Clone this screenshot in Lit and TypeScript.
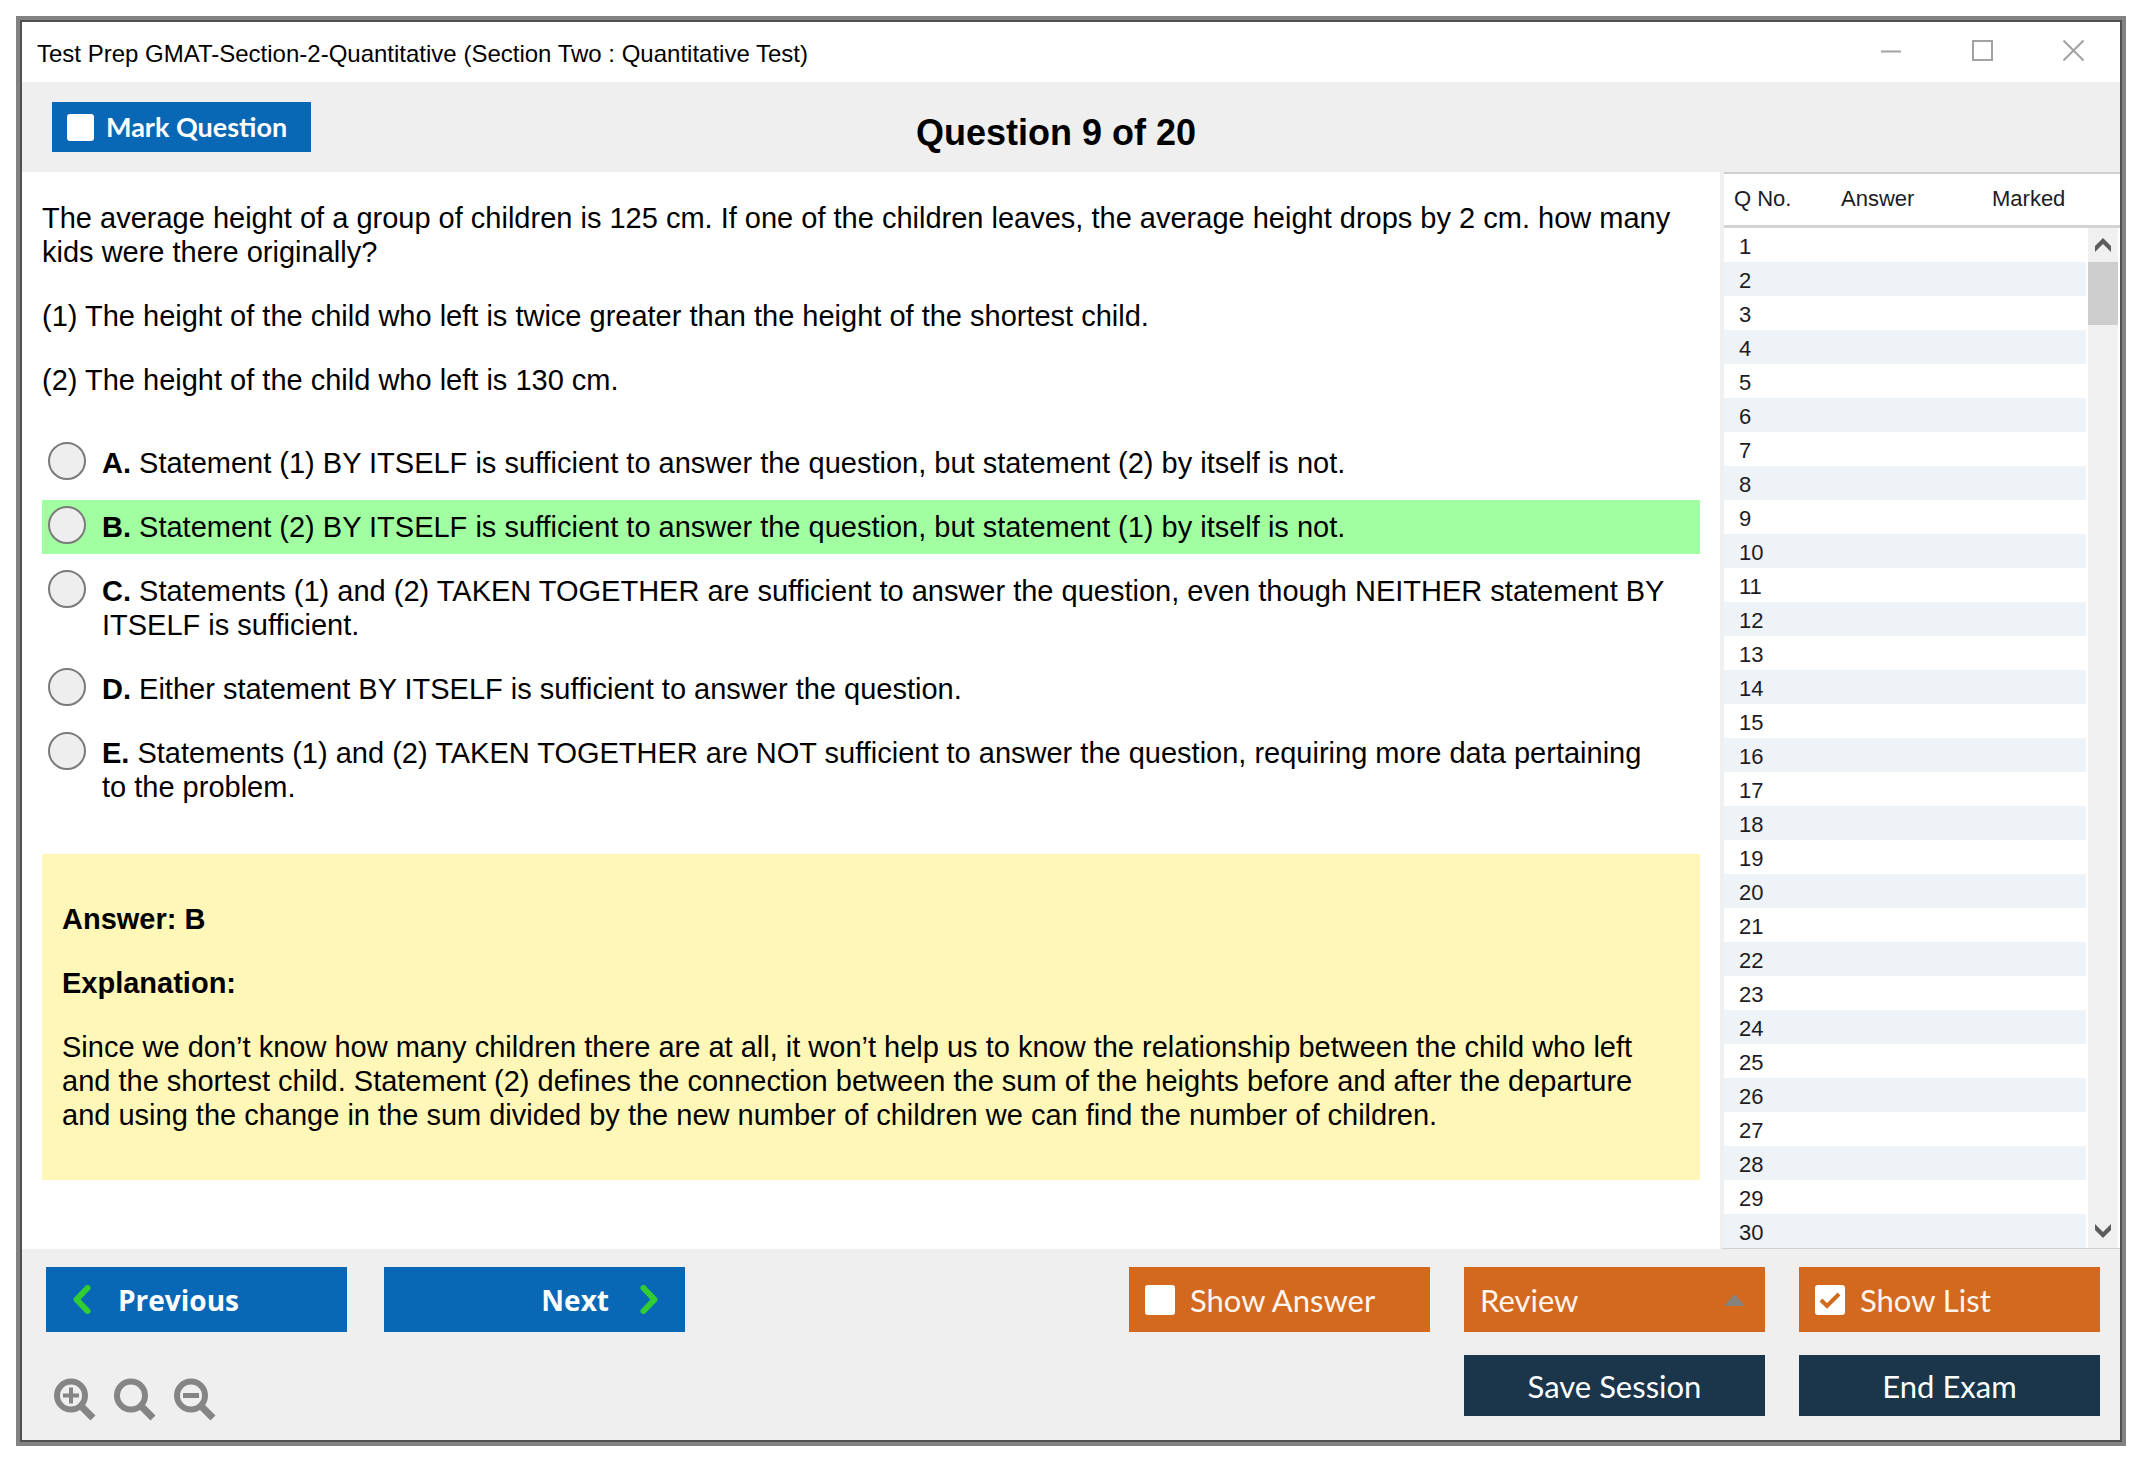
import { LitElement, html, css, svg } from "lit";
import { customElement, state } from "lit/decorators.js";
import { classMap } from "lit/directives/class-map.js";

interface Choice {
  key: string;
  text: string;
}

const CHOICES: Choice[] = [
  { key: "A", text: "Statement (1) BY ITSELF is sufficient to answer the question, but statement (2) by itself is not." },
  { key: "B", text: "Statement (2) BY ITSELF is sufficient to answer the question, but statement (1) by itself is not." },
  { key: "C", text: "Statements (1) and (2) TAKEN TOGETHER are sufficient to answer the question, even though NEITHER statement BY ITSELF is sufficient." },
  { key: "D", text: "Either statement BY ITSELF is sufficient to answer the question." },
  { key: "E", text: "Statements (1) and (2) TAKEN TOGETHER are NOT sufficient to answer the question, requiring more data pertaining to the problem." },
];

const CORRECT = "B";
const ROWS = Array.from({ length: 30 }, (_, i) => i + 1);

@customElement("question-list")
export class QuestionList extends LitElement {
  static styles = css`
    :host {
      display: flex;
      border-left: 4px solid #f0f0f0;
      background: #fff;
      color: #1c1c24;
      font: 22px/30px "Liberation Sans", Arial, sans-serif;
    }
    .table {
      flex: 1;
      border-collapse: separate;
      border-spacing: 0;
      table-layout: fixed;
    }
    .head {
      box-sizing: border-box;
      height: 56px;
      padding: 0 0 2px;
      border-top: 2px solid #cfcfcf;
      border-bottom: 3px solid #d3d3d3;
      font-weight: 400;
      text-align: left;
    }
    .number {
      width: 107px;
      padding-left: 10px;
    }
    .answer {
      width: 150px;
      padding-left: 10px;
    }
    .marked {
      padding-left: 11px;
    }
    .cell {
      box-sizing: border-box;
      height: 34px;
      padding: 4px 0 0 15px;
    }
    .row:nth-child(even) .cell {
      background: #eef3f8;
    }
    .side {
      display: flex;
      flex-direction: column;
      width: 34px;
    }
    .corner {
      box-sizing: border-box;
      height: 56px;
      border-top: 2px solid #cfcfcf;
      border-bottom: 3px solid #d3d3d3;
    }
    .track {
      flex: 1;
      display: flex;
      flex-direction: column;
      margin: 0 2px;
      background: #f0f0f0;
    }
    .arrow {
      display: flex;
      align-items: center;
      justify-content: center;
      height: 34px;
      padding: 0;
      border: 0;
      background: none;
    }
    .thumb {
      height: 63px;
      margin-bottom: auto;
      background: #cdcdcd;
    }
  `;

  render() {
    return html`
      <table class="table">
        <thead>
          <tr>
            <th class="head number" scope="col">Q No.</th>
            <th class="head answer" scope="col">Answer</th>
            <th class="head marked" scope="col">Marked</th>
          </tr>
        </thead>
        <tbody>
          ${ROWS.map((n) => html`<tr class="row"><td class="cell">${n}</td><td class="cell"></td><td class="cell"></td></tr>`)}
        </tbody>
      </table>
      <div class="side">
        <div class="corner"></div>
        <div class="track">
          <button class="arrow" aria-label="Scroll up">
            <svg width="16" height="14" viewBox="0 0 16 14"><path d="M8 0 16 8V14L8 6 0 14V8Z" fill="#5c5c5c" /></svg>
          </button>
          <div class="thumb"></div>
          <button class="arrow" aria-label="Scroll down">
            <svg width="16" height="14" viewBox="0 0 16 14"><path d="M8 14 16 6V0L8 8 0 0V6Z" fill="#5c5c5c" /></svg>
          </button>
        </div>
      </div>
    `;
  }
}

@customElement("app-root")
export class AppRoot extends LitElement {
  @state() private marked = false;
  @state() private showAnswer = false;
  @state() private showList = true;
  @state() private picked = "";

  static styles = css`
    :host {
      display: flex;
      box-sizing: border-box;
      min-height: 100vh;
      padding: 16px 24px 24px 16px;
      background: #fff;
      color: #000;
      font: 29px/34px "Liberation Sans", Arial, sans-serif;
    }
    .window {
      flex: 1;
      display: flex;
      flex-direction: column;
      min-width: 0;
      padding: 2px;
      border: 4px solid #828282;
      background: #505050;
    }
    .titlebar {
      display: flex;
      align-items: center;
      height: 60px;
      padding: 0 36px 0 15px;
      background: #fff;
      font-size: 24px;
    }
    .title {
      flex: 1;
      padding-top: 4px;
    }
    .controls {
      display: flex;
      gap: 70px;
      padding-bottom: 4px;
    }
    .control {
      display: flex;
      padding: 0;
      border: 0;
      background: none;
    }
    .toolbar {
      display: grid;
      grid-template-columns: 1fr auto 1fr;
      align-items: center;
      height: 90px;
      padding: 0 60px 0 30px;
      background: #efefef;
    }
    .heading {
      margin: 0;
      padding-top: 12px;
      font-size: 36px;
      font-weight: 700;
      line-height: 40px;
    }
    .body {
      flex: 1;
      display: flex;
      background: #fff;
    }
    .question {
      flex: 1;
      min-width: 0;
      padding: 29px 20px 20px;
    }
    .text {
      margin: 0 0 30px;
    }
    .choices {
      display: flex;
      flex-direction: column;
      gap: 10px;
      margin: 39px 0 40px;
      padding: 0;
      border: 0;
    }
    .choice {
      display: flex;
      gap: 16px;
      padding: 10px 30px 10px 6px;
    }
    .choice.correct {
      background: #a1ffa1;
    }
    .radio {
      flex: none;
      box-sizing: border-box;
      width: 38px;
      height: 38px;
      margin: -4px 0 0;
      appearance: none;
      border: 2px solid #7b7b7b;
      border-radius: 50%;
      background: #eee;
    }
    .radio:checked {
      background: radial-gradient(#444 45%, #eee 50%);
    }
    .solution {
      padding: 48px 20px;
      background: #fef7b8;
    }
    .solution .text:last-child {
      margin-bottom: 0;
    }
    .list {
      box-sizing: border-box;
      width: 400px;
      border-bottom: 1px solid #cfcfcf;
    }
    .footer {
      display: flex;
      justify-content: space-between;
      gap: 34px;
      padding: 18px 20px 19px 24px;
      background: #efefef;
    }
    .left,
    .right {
      display: grid;
      align-content: start;
      gap: 23px 34px;
    }
    .left {
      grid-template-columns: repeat(2, 301px);
      column-gap: 37px;
    }
    .right {
      grid-template-columns: repeat(3, 301px);
    }
    .btn {
      display: flex;
      align-items: center;
      box-sizing: border-box;
      height: 65px;
      padding: 0 16px;
      border: 0;
      color: #fff;
      font: 31px/34px Lato, Carlito, sans-serif;
    }
    .blue {
      background: #0868b6;
      font: 700 28px/34px "Open Sans", "Noto Sans", sans-serif;
    }
    .orange {
      gap: 15px;
      background: #d2691f;
      color: #fff5ee;
    }
    .navy {
      justify-content: center;
      height: 61px;
      background: #1b354a;
    }
    .mark {
      justify-self: start;
      gap: 12px;
      height: 50px;
      padding: 0 24px 0 15px;
      font: 700 27px/34px Lato, Carlito, sans-serif;
    }
    .previous {
      gap: 26px;
      padding-left: 26px;
    }
    .next {
      justify-content: flex-end;
      gap: 30px;
      padding-right: 26px;
    }
    .review {
      justify-content: space-between;
      padding: 0 20px 0 16px;
    }
    .save {
      grid-column: 2;
    }
    .box {
      box-sizing: border-box;
      flex: none;
      width: 30px;
      height: 30px;
      margin: 0;
      appearance: none;
      border-radius: 3px;
      background: #fff;
    }
    .mark .box {
      width: 27px;
      height: 27px;
    }
    .tick {
      display: grid;
    }
    .tick > * {
      grid-area: 1 / 1;
    }
    .tick svg {
      place-self: center;
      pointer-events: none;
    }
    .zooms {
      grid-column: 1 / -1;
      display: flex;
      gap: 18px;
      padding: 23px 0 0 8px;
    }
  `;

  private check(size: number, on: boolean, toggle: () => void) {
    return html`
      <span class="tick">
        <input class="box" type="checkbox" .checked=${on} @change=${toggle} />
        ${on
          ? html`<svg width=${size} height=${size} viewBox="0 0 22 22"><path d="M2 11 8 17 20 5" fill="none" stroke="#d2691f" stroke-width="4" /></svg>`
          : null}
      </span>
    `;
  }

  private lens(label: string, sign: unknown) {
    return html`
      <button class="control" aria-label=${label}>
        <svg width="42" height="43" viewBox="0 0 42 43" fill="none" stroke="#858585">
          <circle cx="17" cy="17.5" r="14" stroke-width="6" />
          <path d="M27 28 39 40" stroke-width="7" />
          ${sign}
        </svg>
      </button>
    `;
  }

  render() {
    return html`
      <main class="window">
        <header class="titlebar">
          <span class="title">Test Prep GMAT-Section-2-Quantitative (Section Two : Quantitative Test)</span>
          <div class="controls">
            <button class="control" aria-label="Minimize">
              <svg width="21" height="21" viewBox="0 0 21 21"><path d="M0 11.5H20" stroke="#a2a2a2" stroke-width="2" /></svg>
            </button>
            <button class="control" aria-label="Maximize">
              <svg width="21" height="21" viewBox="0 0 21 21"><path d="M1 1H20V20H1Z" fill="none" stroke="#a2a2a2" stroke-width="2" /></svg>
            </button>
            <button class="control" aria-label="Close">
              <svg width="21" height="21" viewBox="0 0 21 21"><path d="M.5.5 20.5 20.5M20.5.5.5 20.5" stroke="#a2a2a2" stroke-width="2" /></svg>
            </button>
          </div>
        </header>

        <div class="toolbar">
          <label class="btn blue mark">${this.check(20, this.marked, () => (this.marked = !this.marked))}Mark Question</label>
          <h1 class="heading">Question 9 of 20</h1>
        </div>

        <div class="body">
          <section class="question">
            <p class="text">The average height of a group of children is 125 cm. If one of the children leaves, the average height drops by 2 cm. how many kids were there originally?</p>
            <p class="text">(1) The height of the child who left is twice greater than the height of the shortest child.</p>
            <p class="text">(2) The height of the child who left is 130 cm.</p>

            <fieldset class="choices">
              ${CHOICES.map(
                (c) => html`
                  <label class=${classMap({ choice: true, correct: c.key === CORRECT })}>
                    <input class="radio" type="radio" name="choice" .checked=${this.picked === c.key} @change=${() => (this.picked = c.key)} />
                    <span><b>${c.key}.</b> ${c.text}</span>
                  </label>
                `,
              )}
            </fieldset>

            <div class="solution">
              <p class="text"><b>Answer: B</b></p>
              <p class="text"><b>Explanation:</b></p>
              <p class="text">Since we don’t know how many children there are at all, it won’t help us to know the relationship between the child who left and the shortest child. Statement (2) defines the connection between the sum of the heights before and after the departure and using the change in the sum divided by the new number of children we can find the number of children.</p>
            </div>
          </section>
          ${this.showList ? html`<question-list class="list"></question-list>` : null}
        </div>

        <footer class="footer">
          <div class="left">
            <button class="btn blue previous">
              <svg width="20" height="29" viewBox="0 0 20 29"><path d="M15.5 3 4.500 14.500 15.500 26" fill="none" stroke="#32cd32" stroke-width="6" stroke-linecap="round" stroke-linejoin="round" /></svg>
              Previous
            </button>
            <button class="btn blue next">
              Next
              <svg width="20" height="29" viewBox="0 0 20 29"><path d="M4.500 3 15.500 14.500 4.500 26" fill="none" stroke="#32cd32" stroke-width="6" stroke-linecap="round" stroke-linejoin="round" /></svg>
            </button>
            <div class="zooms">
              ${this.lens("Zoom in", svg`<path d="M9 17.500H25M17 9.500V25.500" stroke-width="4" />`)}
              ${this.lens("Reset zoom", null)}
              ${this.lens("Zoom out", svg`<path d="M9 17.500H25" stroke-width="5" />`)}
            </div>
          </div>
          <div class="right">
            <label class="btn orange">${this.check(22, this.showAnswer, () => (this.showAnswer = !this.showAnswer))}Show Answer</label>
            <button class="btn orange review">
              Review
              <svg width="21" height="12" viewBox="0 0 21 12"><path d="M10.500 0 21 12H0Z" fill="#85837e" /></svg>
            </button>
            <label class="btn orange">${this.check(22, this.showList, () => (this.showList = !this.showList))}Show List</label>
            <button class="btn navy save">Save Session</button>
            <button class="btn navy">End Exam</button>
          </div>
        </footer>
      </main>
    `;
  }
}
